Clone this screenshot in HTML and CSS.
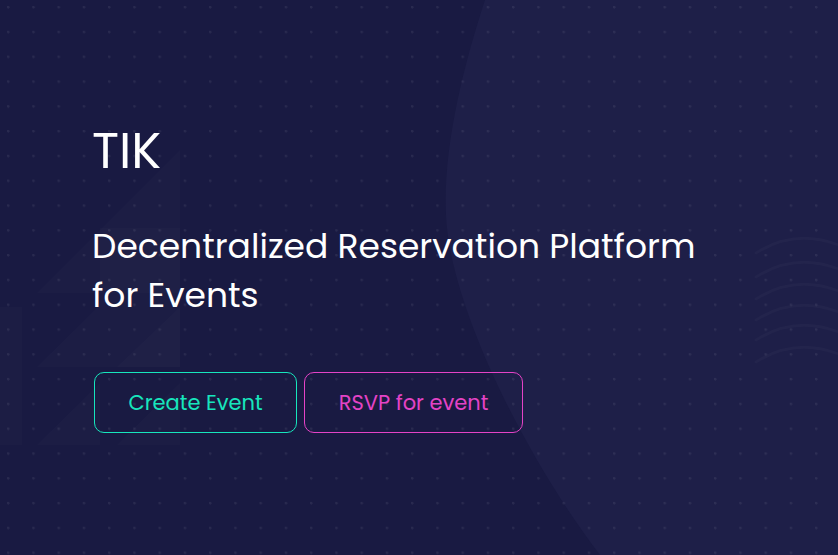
FILE: index.html
```html
<!DOCTYPE html>
<html lang="en">
<head>
<meta charset="utf-8">
<title>TIK</title>
<link rel="stylesheet" href="styles.css">
</head>
<body>
<main class="hero">
  <svg class="deco" width="838" height="555" viewBox="0 0 838 555" aria-hidden="true">
    <path class="blob" d="M485,0 C462,70 443,150 446,215 C449,300 520,450 600,555 L838,555 L838,0 Z"/>
    <g class="tri">
      <polygon points="180,150 180,293 37,293"/>
      <polygon points="100,305 100,367 37,367"/>
      <polygon points="180,307 180,367 117,367"/>
      <polygon points="100,383 100,445 37,445"/>
      <polygon points="180,383 180,445 117,445"/>
      <polygon points="0,307 22,307 22,445 0,445"/>
      <polygon points="100,228 180,228 180,367 100,367"/>
    </g>
    <g class="arcs">
      <path d="M756,253 Q800,225 850,250"/>
      <path d="M756,277 Q800,249 850,274"/>
      <path d="M756,299 Q800,271 850,296"/>
      <path d="M756,320 Q800,292 850,317"/>
      <path d="M756,340 Q800,312 850,337"/>
      <path d="M756,362 Q800,334 850,359"/>
    </g>
  </svg>
  <div class="dots"></div>
  <div class="content">
    <h1 class="title">TIK</h1>
    <p class="subtitle">Decentralized Reservation Platform<br>for Events</p>
    <div class="actions">
      <button class="btn btn-create" type="button">Create Event</button>
      <button class="btn btn-rsvp" type="button">RSVP for event</button>
    </div>
  </div>
</main>
</body>
</html>
```
FILE: styles.css
```css
html, body {
  margin: 0;
  padding: 0;
  background: #191a42;
}
.hero {
  position: relative;
  width: 838px;
  height: 555px;
  overflow: hidden;
  background: #191a42;
  font-family: "Poppins", "Inter", "Open Sans", sans-serif;
  color: #ffffff;
}
.deco {
  position: absolute;
  left: 0;
  top: 0;
}
.blob {
  fill: #1e1f48;
}
.tri polygon {
  fill: rgba(255, 255, 255, 0.016);
}
.arcs path {
  fill: none;
  stroke: rgba(255, 255, 255, 0.025);
  stroke-width: 3;
  stroke-linecap: round;
}
.dots {
  position: absolute;
  inset: 0;
  background-image: radial-gradient(circle at 1.2px 1.2px, rgba(255, 255, 255, 0.07) 1.1px, transparent 1.6px);
  background-size: 25.25px 24.8px;
  background-position: 7px 6px;
}
.content {
  position: relative;
  padding: 126px 0 0 93px;
}
.title {
  margin: 0;
  font-size: 50px;
  line-height: 50px;
  font-weight: 400;
  margin-left: -1px;
}
.subtitle {
  margin: 45.5px 0 0;
  font-size: 34.5px;
  line-height: 49px;
  font-weight: 400;
  margin-left: -1px;
}
.actions {
  display: flex;
  gap: 7px;
  margin-top: 52.5px;
  padding-left: 1px;
}
.btn {
  height: 61px;
  padding: 0 33.5px;
  background: transparent;
  border: 1px solid;
  border-radius: 10px;
  font-family: inherit;
  font-size: 21px;
  font-weight: 400;
}
.btn-create {
  color: #17e6bd;
  border-color: #17e6bd;
}
.btn-rsvp {
  color: #e443c6;
  border-color: #e443c6;
}
```
